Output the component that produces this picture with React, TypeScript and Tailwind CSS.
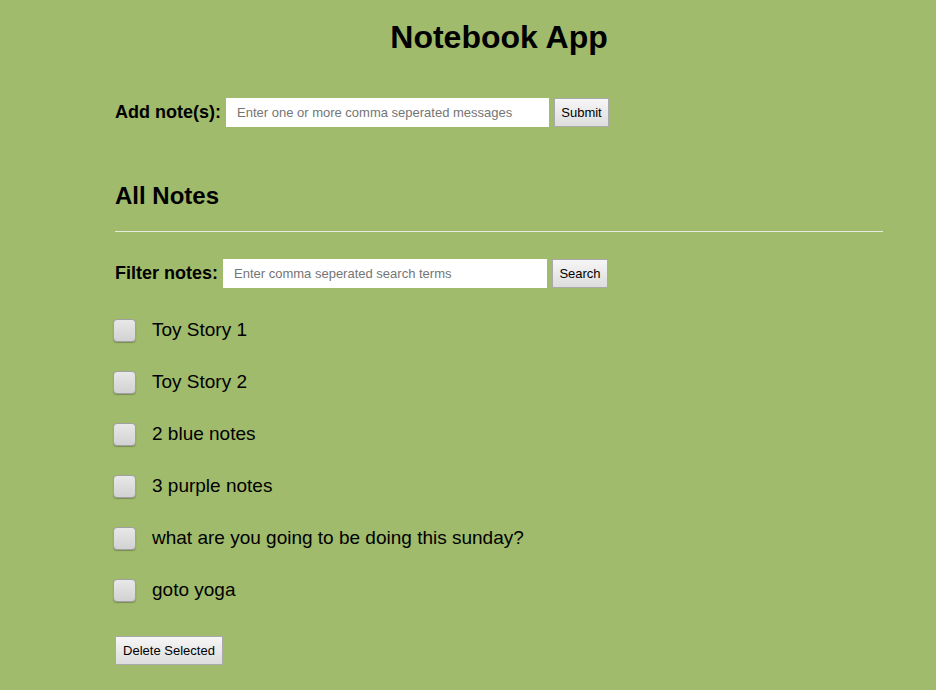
import { useState } from 'react'

const notes = [
  'Toy Story 1',
  'Toy Story 2',
  '2 blue notes',
  '3 purple notes',
  'what are you going to be doing this sunday?',
  'goto yoga',
]

export default function App() {
  const [checked, setChecked] = useState<boolean[]>(notes.map(() => false))

  return (
    <div className="min-h-[690px] bg-[#a0bb6b] font-['Liberation_Sans',Arial,sans-serif] text-black">
      <div className="ml-[115px] w-[768px] pt-[18px]">
        <h1 className="text-center text-[32px] font-bold leading-[38px]">Notebook App</h1>

        <div className="mt-[42px] flex items-center">
          <label className="text-[18px] font-bold">Add note(s):</label>
          <input
            className="ml-[5px] h-[29px] w-[323px] bg-white px-[11px] text-[13px] outline-none placeholder:text-[#757575]"
            placeholder="Enter one or more comma seperated messages"
          />
          <GrayButton className="ml-[5px] w-[55px]">Submit</GrayButton>
        </div>

        <h2 className="mt-[55px] text-[24px] font-bold leading-[28px]">All Notes</h2>
        <div className="mt-[21px] h-px bg-[#e6ecdc]" />

        <div className="mt-[27px] flex items-center">
          <label className="text-[18px] font-bold">Filter notes:</label>
          <input
            className="ml-[5px] h-[29px] w-[324px] bg-white px-[11px] text-[13px] outline-none placeholder:text-[#757575]"
            placeholder="Enter comma seperated search terms"
          />
          <GrayButton className="ml-[5px] w-[56px]">Search</GrayButton>
        </div>

        <ul className="mt-[16px] -ml-[2px] flex flex-col">
          {notes.map((n, i) => (
            <li key={n} className="flex h-[52px] items-center">
              <button
                onClick={() => setChecked(c => c.map((v, j) => (j === i ? !v : v)))}
                className="h-[23px] w-[23px] rounded-[4px] border border-[#a0a0a0] bg-gradient-to-b from-[#e8e8e8] to-[#d2d2d2] shadow-[0_1px_1px_rgba(0,0,0,0.25)] text-[14px] leading-none"
              >
                {checked[i] ? '✓' : ''}
              </button>
              <span className="ml-[16px] text-[19px]">{n}</span>
            </li>
          ))}
        </ul>

        <GrayButton className="mt-[20px] w-[108px]">Delete Selected</GrayButton>
      </div>
    </div>
  )
}

function GrayButton({ children, className = '' }: { children: React.ReactNode; className?: string }) {
  return (
    <button
      className={`h-[29px] border border-[#a9a9a9] bg-gradient-to-b from-[#f6f6f6] to-[#dddddd] text-[13px] text-black ${className}`}
    >
      {children}
    </button>
  )
}
